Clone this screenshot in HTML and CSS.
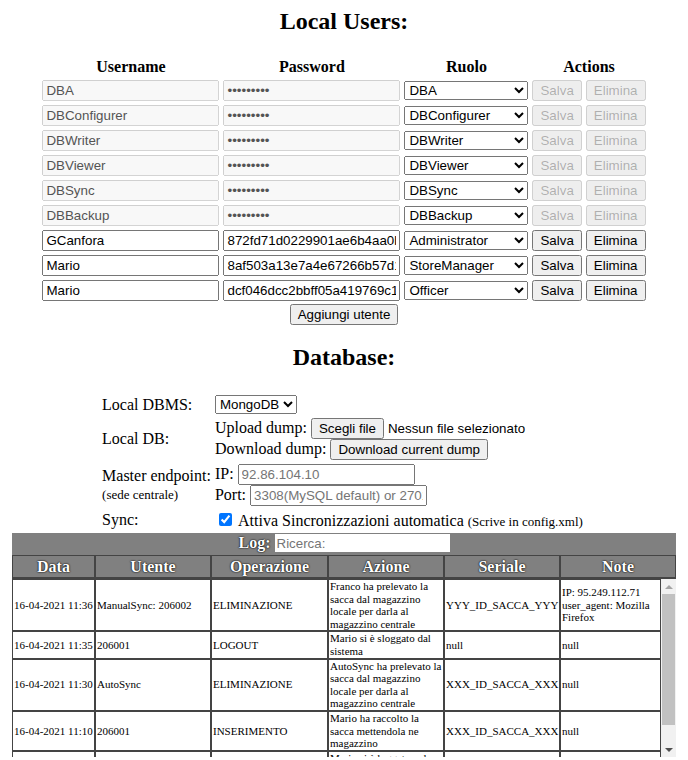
FILE: index.html
```html
<!DOCTYPE html>
<html>
<head>
<meta charset="utf-8">
<link rel="stylesheet" href="styles.css">
</head>
<body>
<h2 class="title">Local Users:</h2>
<table class="users">
  <tr><th>Username</th><th>Password</th><th>Ruolo</th><th>Actions</th></tr>
  <tr>
    <td><input class="field" type="text" value="DBA" disabled></td>
    <td><input class="field" type="password" value="123456789" disabled></td>
    <td><select class="role"><option>DBA</option></select></td>
    <td><button disabled>Salva</button> <button disabled>Elimina</button></td>
  </tr>
  <tr>
    <td><input class="field" type="text" value="DBConfigurer" disabled></td>
    <td><input class="field" type="password" value="123456789" disabled></td>
    <td><select class="role"><option>DBConfigurer</option></select></td>
    <td><button disabled>Salva</button> <button disabled>Elimina</button></td>
  </tr>
  <tr>
    <td><input class="field" type="text" value="DBWriter" disabled></td>
    <td><input class="field" type="password" value="123456789" disabled></td>
    <td><select class="role"><option>DBWriter</option></select></td>
    <td><button disabled>Salva</button> <button disabled>Elimina</button></td>
  </tr>
  <tr>
    <td><input class="field" type="text" value="DBViewer" disabled></td>
    <td><input class="field" type="password" value="123456789" disabled></td>
    <td><select class="role"><option>DBViewer</option></select></td>
    <td><button disabled>Salva</button> <button disabled>Elimina</button></td>
  </tr>
  <tr>
    <td><input class="field" type="text" value="DBSync" disabled></td>
    <td><input class="field" type="password" value="123456789" disabled></td>
    <td><select class="role"><option>DBSync</option></select></td>
    <td><button disabled>Salva</button> <button disabled>Elimina</button></td>
  </tr>
  <tr>
    <td><input class="field" type="text" value="DBBackup" disabled></td>
    <td><input class="field" type="password" value="123456789" disabled></td>
    <td><select class="role"><option>DBBackup</option></select></td>
    <td><button disabled>Salva</button> <button disabled>Elimina</button></td>
  </tr>
  <tr>
    <td><input class="field" type="text" value="GCanfora"></td>
    <td><input class="field" type="text" value="872fd71d0229901ae6b4aa0b8c2f1e7d"></td>
    <td><select class="role"><option>Administrator</option><option>StoreManager</option><option>Officer</option></select></td>
    <td><button>Salva</button> <button>Elimina</button></td>
  </tr>
  <tr>
    <td><input class="field" type="text" value="Mario"></td>
    <td><input class="field" type="text" value="8af503a13e7a4e67266b57d1c93f0a2e"></td>
    <td><select class="role"><option>StoreManager</option><option>Administrator</option><option>Officer</option></select></td>
    <td><button>Salva</button> <button>Elimina</button></td>
  </tr>
  <tr>
    <td><input class="field" type="text" value="Mario"></td>
    <td><input class="field" type="text" value="dcf046dcc2bbff05a419769c1e0d8b3a"></td>
    <td><select class="role"><option>Officer</option><option>Administrator</option><option>StoreManager</option></select></td>
    <td><button>Salva</button> <button>Elimina</button></td>
  </tr>
</table>
<div class="add"><button>Aggiungi utente</button></div>

<h2 class="title db-title">Database:</h2>
<table class="db">
  <tr>
    <td>Local DBMS:</td>
    <td><select><option>MongoDB</option><option>MySQL</option></select></td>
  </tr>
  <tr>
    <td>Local DB:</td>
    <td>Upload dump: <button>Scegli file</button><span class="nofile">Nessun file selezionato</span><br>Download dump: <button>Download current dump</button></td>
  </tr>
  <tr>
    <td>Master endpoint:<br><span class="small">(sede centrale)</span></td>
    <td>IP: <input class="field" type="text" placeholder="92.86.104.10"><br>Port: <input class="field" type="text" placeholder="3308(MySQL default) or 27017(MongoDB default)"></td>
  </tr>
  <tr>
    <td>Sync:</td>
    <td><input type="checkbox" checked> Attiva Sincronizzazioni automatica <span class="small hint">(Scrive in config.xml)</span></td>
  </tr>
</table>

<div class="log">
  <div class="logbar"><b class="shadow">Log:</b> <input class="search" type="text" placeholder="Ricerca:"></div>
  <table class="loghead">
    <colgroup><col class="c1"><col class="c2"><col class="c3"><col class="c4"><col class="c5"><col class="c6h"></colgroup>
    <tr><th>Data</th><th>Utente</th><th>Operazione</th><th>Azione</th><th>Seriale</th><th>Note</th></tr>
  </table>
  <div class="logscroll">
    <table class="logbody">
      <colgroup><col class="c1"><col class="c2"><col class="c3"><col class="c4"><col class="c5"><col class="c6"></colgroup>
      <tr><td>16-04-2021 11:36</td><td>ManualSync: 206002</td><td>ELIMINAZIONE</td><td>Franco ha prelevato la sacca dal magazzino locale per darla al magazzino centrale</td><td>YYY_ID_SACCA_YYY</td><td>IP: 95.249.112.71 user_agent: Mozilla Firefox</td></tr>
      <tr><td>16-04-2021 11:35</td><td>206001</td><td>LOGOUT</td><td>Mario si è sloggato dal sistema</td><td>null</td><td>null</td></tr>
      <tr><td>16-04-2021 11:30</td><td>AutoSync</td><td>ELIMINAZIONE</td><td>AutoSync ha prelevato la sacca dal magazzino locale per darla al magazzino centrale</td><td>XXX_ID_SACCA_XXX</td><td>null</td></tr>
      <tr><td>16-04-2021 11:10</td><td>206001</td><td>INSERIMENTO</td><td>Mario ha raccolto la sacca mettendola ne magazzino</td><td>XXX_ID_SACCA_XXX</td><td>null</td></tr>
      <tr><td>16-04-2021 11:05</td><td>206001</td><td>LOGIN</td><td>Mario si è loggato nel sistema</td><td>null</td><td>null</td></tr>
    </table>
    <div class="sbar">
      <div class="sbtn"><span class="arrow-up"></span></div>
      <div class="strack"><div class="sthumb"></div></div>
      <div class="sbtn"><span class="arrow-down"></span></div>
    </div>
  </div>
</div>
</body>
</html>
```

FILE: styles.css
```css
html {
  font-family: "Liberation Serif", "Times New Roman", serif;
  font-size: 16px;
  color: #000;
  background: #fff;
}

body {
  margin: 8px 8px 0;
}

input, select, button {
  font-family: "Liberation Sans", Arial, sans-serif;
  font-size: 13.333px;
}

.title {
  font-size: 24px;
  font-weight: bold;
  text-align: center;
  margin: 0 0 20px;
}

.db-title {
  margin-top: 19px;
  margin-bottom: 21px;
}

.users {
  margin: 0 auto;
  border-spacing: 2px;
}

.users th,
.users td {
  padding: 1px;
}

.field {
  width: 177px;
  box-sizing: border-box;
}

.role {
  width: 124px;
}

.add {
  text-align: center;
}

.db {
  margin: 0 auto;
  border-spacing: 2px;
}

.db td {
  padding: 1px;
}

.small {
  font-size: 13px;
}

.hint {
  margin-right: 3px;
}

.nofile {
  margin-left: 4px;
  font-family: "Liberation Sans", Arial, sans-serif;
  font-size: 13.333px;
}

.log {
  margin: 0 4px;
  background: #808080;
}

.logbar {
  text-align: center;
  padding: 1px 0;
  line-height: 18px;
  height: 22px;
  box-sizing: border-box;
}

.shadow,
.loghead th {
  color: #fff;
  text-shadow: 0 0 2px #000, 0 0 1px #000;
}

.search {
  width: 175px;
  height: 18px;
  box-sizing: border-box;
  border: none;
  padding: 1px 2px;
  background: #fff;
  vertical-align: top;
}

.loghead,
.logbody {
  border-collapse: separate;
  border-spacing: 0;
  table-layout: fixed;
}

.loghead {
  width: 100%;
  background: #808080;
}

.loghead th {
  border: 1px solid #444;
  padding: 0 1px;
  height: 23px;
  box-sizing: border-box;
  line-height: 20px;
  font-size: 16px;
  font-weight: bold;
  text-align: center;
}

.c1 { width: 83px; }
.c2 { width: 116px; }
.c3 { width: 117px; }
.c4 { width: 116px; }
.c5 { width: 116px; }
.c6h { width: 116px; }
.c6 { width: 101px; }

.logscroll {
  display: flex;
  align-items: flex-start;
  height: 178px;
  overflow: hidden;
  background: #fff;
  border-top: 1px solid #444;
}

.logbody {
  width: 649px;
  flex: none;
}

.logbody td {
  border: 1px solid #444;
  padding: 0 1px;
  font-size: 11px;
  line-height: 12.6px;
  background: #fff;
  vertical-align: middle;
  text-align: left;
}

.sbar {
  flex: none;
  width: 15px;
  height: 100%;
  display: flex;
  flex-direction: column;
  background: #f1f1f1;
}

.sbtn {
  height: 15px;
  flex: none;
  display: flex;
  align-items: center;
  justify-content: center;
}

.arrow-up {
  width: 0;
  height: 0;
  border-left: 4px solid transparent;
  border-right: 4px solid transparent;
  border-bottom: 4px solid #a3a3a3;
}

.arrow-down {
  width: 0;
  height: 0;
  border-left: 4px solid transparent;
  border-right: 4px solid transparent;
  border-top: 4px solid #505050;
}

.strack {
  flex: 1;
  padding: 0 1px;
}

.sthumb {
  height: 131px;
  background: #c1c1c1;
}
```
